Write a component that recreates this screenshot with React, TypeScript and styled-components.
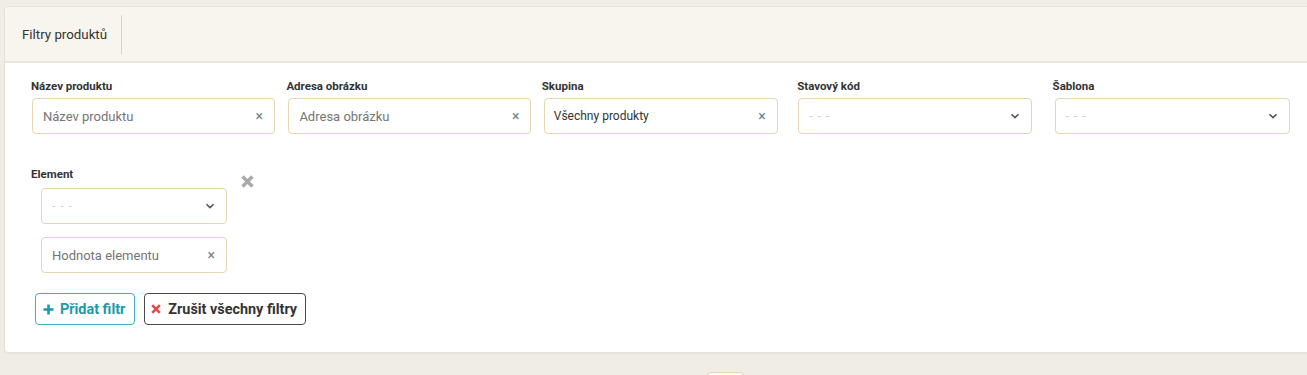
import React from 'react';
import styled, { createGlobalStyle } from 'styled-components';

const GlobalStyle = createGlobalStyle`
  html, body {
    margin: 0;
    padding: 0;
    background: #f0ede6;
    overflow-x: hidden;
  }
  body {
    font-family: Roboto, "Liberation Sans", Arial, sans-serif;
    color: #333;
  }
`;

const Page = styled.div`
  padding: 6px 0 0 4px;
`;

const Card = styled.section`
  margin-right: -12px;
  background: #fff;
  border: 1px solid #e6e2d8;
  border-radius: 4px;
  box-shadow: 0 1px 1px rgba(0, 0, 0, 0.04);
`;

const CardHeader = styled.header`
  display: flex;
  align-items: center;
  height: 56px;
  background: #f8f5ee;
  border-bottom: 2px solid #ebe7dd;
  border-radius: 4px 4px 0 0;
  box-sizing: border-box;
`;

const HeaderTab = styled.div`
  display: flex;
  align-items: center;
  height: 39px;
  padding: 0 14px 0 17px;
  border-right: 1px solid #d9d5cc;
  font-size: 13.3px;
  color: #333;
`;

const CardBody = styled.div`
  padding: 16px 0 27px 26px;
`;

const FieldRow = styled.div`
  display: grid;
  grid-template-columns: repeat(5, 255.4px);
`;

const FieldGroup = styled.div`
  display: flex;
  flex-direction: column;
`;

const Label = styled.label`
  font-size: 11.5px;
  line-height: 14px;
  font-weight: 700;
  color: #333;
`;

const Field = styled.div<{ $width: number; $offset?: number; $gap?: number }>`
  display: flex;
  align-items: center;
  justify-content: space-between;
  box-sizing: border-box;
  width: ${(p) => p.$width}px;
  height: 36px;
  margin: ${(p) => p.$gap ?? 5}px 0 0 ${(p) => p.$offset ?? 1}px;
  padding: 0 11px 0 10px;
  border: 1px solid #e6d6b0;
  border-radius: 4px;
  background: #fff;
`;

const Placeholder = styled.span`
  font-size: 13px;
  color: #757575;
`;

const Value = styled.span`
  margin-left: -1px;
  font-size: 12px;
  color: #333;
`;

const Dashes = styled.span`
  font-size: 12px;
  letter-spacing: 1px;
  color: #d0d0d0;
`;

const ClearMark = styled.span`
  font-size: 14px;
  line-height: 1;
  color: #6f7f8f;
`;

const ElementBlock = styled.div`
  display: flex;
  align-items: flex-start;
  margin-top: 33px;
`;

const ElementFields = styled.div`
  display: flex;
  flex-direction: column;
`;

const RemoveButton = styled.button`
  display: flex;
  margin: 8px 0 0 14px;
  padding: 0;
  border: 0;
  background: none;
  cursor: pointer;
`;

const Actions = styled.div`
  display: flex;
  gap: 9px;
  margin: 20px 0 0 4px;
`;

const ActionButton = styled.button<{ $tone: 'teal' | 'dark' }>`
  display: inline-flex;
  align-items: center;
  height: 32px;
  border-radius: 4px;
  background: #fff;
  font-family: Roboto, "Liberation Sans", Arial, sans-serif;
  font-size: 14.4px;
  font-weight: 700;
  gap: ${(p) => (p.$tone === 'teal' ? 6 : 7)}px;
  padding: ${(p) => (p.$tone === 'teal' ? '0 9px 0 7px' : '0 8px 0 6px')};
  border: 1px solid ${(p) => (p.$tone === 'teal' ? '#3bb3c1' : '#4a4a4a')};
  color: ${(p) => (p.$tone === 'teal' ? '#1a9aab' : '#333')};
`;

const Pager = styled.div`
  display: flex;
  padding: 19px 0 0 703px;
`;

const PagerBox = styled.div`
  width: 35px;
  height: 30px;
  border: 1px solid #e6d6b0;
  border-radius: 4px;
  background: #fdfcf8;
`;

const Chevron = () => (
  <svg width="10" height="10" viewBox="0 0 10 10">
    <path d="M1.5 3.2 L5 6.6 L8.5 3.2" fill="none" stroke="#555" strokeWidth="1.6" />
  </svg>
);

const Plus = () => (
  <svg width="11" height="11" viewBox="0 0 11 11">
    <path d="M5.5 0.5 V10.5 M0.5 5.5 H10.5" stroke="#1a9aab" strokeWidth="2.6" />
  </svg>
);

const Cross = ({ color, size }: { color: string; size: number }) => (
  <svg width={size} height={size} viewBox="0 0 10 10">
    <path d="M1.2 1.2 L8.8 8.8 M8.8 1.2 L1.2 8.8" stroke={color} strokeWidth="2.6" />
  </svg>
);

const topFields = [
  { label: 'Název produktu', width: 243, offset: 1, kind: 'text', text: 'Název produktu' },
  { label: 'Adresa obrázku', width: 243, offset: 2, kind: 'text', text: 'Adresa obrázku' },
  { label: 'Skupina', width: 234, offset: 2, kind: 'value', text: 'Všechny produkty' },
  { label: 'Stavový kód', width: 234, offset: 1, kind: 'select', text: '' },
  { label: 'Šablona', width: 235, offset: 2, kind: 'select', text: '' },
];

const App: React.FC = () => (
  <>
    <GlobalStyle />
    <Page>
      <Card>
        <CardHeader>
          <HeaderTab>Filtry produktů</HeaderTab>
        </CardHeader>
        <CardBody>
          <FieldRow>
            {topFields.map((f) => (
              <FieldGroup key={f.label}>
                <Label>{f.label}</Label>
                <Field $width={f.width} $offset={f.offset}>
                  {f.kind === 'text' && <Placeholder>{f.text}</Placeholder>}
                  {f.kind === 'value' && <Value>{f.text}</Value>}
                  {f.kind === 'select' && <Dashes>- - -</Dashes>}
                  {f.kind === 'select' ? <Chevron /> : <ClearMark>×</ClearMark>}
                </Field>
              </FieldGroup>
            ))}
          </FieldRow>

          <ElementBlock>
            <FieldGroup>
              <Label>Element</Label>
              <ElementFields>
                <Field $width={186} $offset={10} $gap={7}>
                  <Dashes>- - -</Dashes>
                  <Chevron />
                </Field>
                <Field $width={186} $offset={10} $gap={13}>
                  <Placeholder>Hodnota elementu</Placeholder>
                  <ClearMark>×</ClearMark>
                </Field>
              </ElementFields>
            </FieldGroup>
            <RemoveButton aria-label="Odebrat">
              <Cross color="#a9a9a9" size={13} />
            </RemoveButton>
          </ElementBlock>

          <Actions>
            <ActionButton $tone="teal">
              <Plus />
              Přidat filtr
            </ActionButton>
            <ActionButton $tone="dark">
              <Cross color="#e5484d" size={10} />
              Zrušit všechny filtry
            </ActionButton>
          </Actions>
        </CardBody>
      </Card>
      <Pager>
        <PagerBox />
      </Pager>
    </Page>
  </>
);

export default App;
